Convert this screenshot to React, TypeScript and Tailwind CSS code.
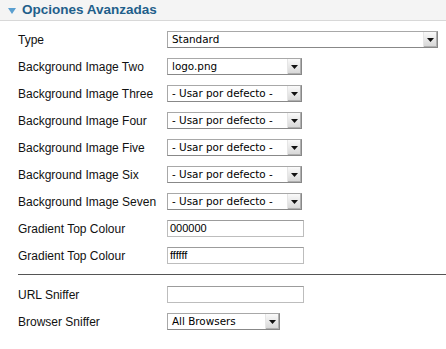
import React from 'react'

const label = 'text-[12px] text-[#111] leading-none'
const ctrlFont = { fontFamily: '"DejaVu Sans", Verdana, sans-serif' }

function Select({ value, width }: { value: string; width: string }) {
    return (
        <div
            className={`${width} h-[17px] flex items-stretch border border-[#a8a8a8] border-r-[#888] border-b-[#888] bg-white`}
        >
            <span className="flex-1 pl-[4px] text-[10.4px] leading-[15px] text-black truncate" style={ctrlFont}>
                {value}
            </span>
            <span className="w-[14px] flex items-center justify-center bg-gradient-to-b from-[#fafafa] to-[#d6d6d6] border-l border-[#e6e6e6] shadow-[inset_-1px_-1px_0_#b0b0b0]">
                <svg width="7" height="4" viewBox="0 0 7 4">
                    <path d="M0 0h7L3.5 4z" fill="#111" />
                </svg>
            </span>
        </div>
    )
}

function TextInput({ value }: { value: string }) {
    return (
        <div className="w-[137px] h-[17px] border border-[#bdbdbd] border-t-[#9c9c9c] bg-white pl-[2px] text-[11px] leading-[15px] text-black font-['Liberation_Sans',Arial,sans-serif]">
            {value}
        </div>
    )
}

function Row({ name, children }: { name: string; children: React.ReactNode }) {
    return (
        <div className="flex items-center h-[27px]">
            <div className={`w-[149px] ${label}`}>{name}</div>
            {children}
        </div>
    )
}

export default function App() {
    const rows = ['Two', 'Three', 'Four', 'Five', 'Six', 'Seven']
    return (
        <div className="w-[446px] h-[349px] bg-white font-['Liberation_Sans',Arial,sans-serif] overflow-hidden">
            {/* Kopfzeile */}
            <div className="h-[21px] bg-[#f4f4f4] border-b border-[#d8d8d8] flex items-center pl-[8px]">
                <svg width="8" height="6" viewBox="0 0 8 6" className="mr-[6px] mt-[1px]">
                    <path d="M0 0h8L4 6z" fill="#5a9fd0" />
                </svg>
                <span className="text-[13.5px] font-bold text-[#1f5f8b]">Opciones Avanzadas</span>
            </div>

            <div className="pl-[18px] pt-[5px]">
                <Row name="Type">
                    <Select value="Standard" width="w-[271px]" />
                </Row>
                <Row name="Background Image Two">
                    <Select value="logo.png" width="w-[135px]" />
                </Row>
                {rows.slice(1).map((r) => (
                    <Row key={r} name={`Background Image ${r}`}>
                        <Select value="- Usar por defecto -" width="w-[135px]" />
                    </Row>
                ))}
                <Row name="Gradient Top Colour">
                    <TextInput value="000000" />
                </Row>
                <Row name="Gradient Top Colour">
                    <TextInput value="ffffff" />
                </Row>

                <div className="h-px bg-[#555] mt-[5px] mb-[6px]" />

                <Row name="URL Sniffer">
                    <TextInput value="" />
                </Row>
                <Row name="Browser Sniffer">
                    <Select value="All Browsers" width="w-[113px]" />
                </Row>
            </div>
        </div>
    )
}
